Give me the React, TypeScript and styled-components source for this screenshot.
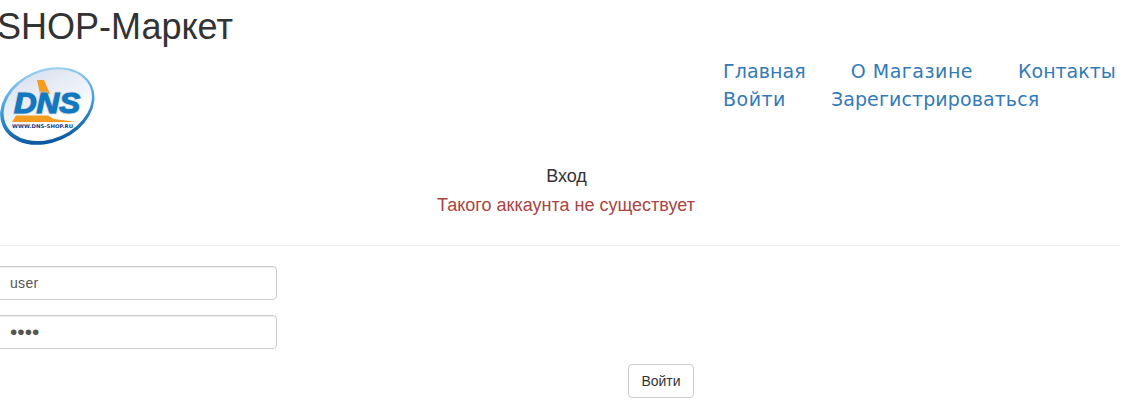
import React from "react";
import styled, { createGlobalStyle } from "styled-components";

const Global = createGlobalStyle`
  html, body { margin: 0; padding: 0; background: #fff; overflow: hidden; }
  body { font-family: "Liberation Sans", Arial, sans-serif; font-size: 14px; line-height: 20px; color: #333; }
`;

const Page = styled.div`
  width: 1120px;
  height: 403px;
`;

const Title = styled.h1`
  margin: 0;
  padding-top: 7px;
  height: 37px;
  font-size: 36px;
  font-weight: 400;
  line-height: 40px;
  color: #333;
  text-indent: -3px;
`;

const Header = styled.header`
  display: flex;
  justify-content: space-between;
  margin-top: 23px;
  height: 98px;
`;

const Logo = styled.svg`
  display: block;
  width: 96px;
  height: 80px;
`;

const Nav = styled.nav`
  width: 397px;
  margin-top: -10px;
  display: flex;
  flex-wrap: wrap;
  column-gap: 45px;
  align-content: flex-start;
`;

const NavLink = styled.a<{ $ls: number }>`
  font-family: "DejaVu Sans", sans-serif;
  font-size: 19px;
  line-height: 28px;
  height: 28px;
  color: #337ab7;
  text-decoration: none;
  white-space: nowrap;
  letter-spacing: ${(p) => p.$ls}px;
`;

const Heading = styled.div`
  text-align: center;
  font-size: 18px;
  line-height: 23px;
  color: #333;
  padding-left: 13px;
`;

const ErrorText = styled.div`
  margin-top: 6px;
  text-align: center;
  font-size: 18px;
  line-height: 23px;
  color: #a94442;
  padding-left: 12px;
`;

const Rule = styled.hr`
  margin: 28px 0 20px;
  border: 0;
  border-top: 1px solid #eee;
`;

const Field = styled.input`
  display: block;
  box-sizing: border-box;
  width: 283px;
  height: 34px;
  margin: 0 0 15px -6px;
  padding: 6px 12px 6px 15px;
  border: 1px solid #ccc;
  border-radius: 4px;
  background: #fff;
  color: #555;
  font-family: "Liberation Sans", Arial, sans-serif;
  font-size: 14px;
  letter-spacing: 0.3px;
  box-shadow: inset 0 1px 1px rgba(0, 0, 0, 0.075);
  outline: none;
`;

const PasswordField = styled(Field)`
  font-size: 21px;
  letter-spacing: 0;
`;

const Actions = styled.div`
  display: flex;
  padding-left: 628px;
`;

const Submit = styled.button`
  box-sizing: border-box;
  width: 66px;
  height: 34px;
  border: 1px solid #ccc;
  border-radius: 4px;
  background: #fff;
  color: #333;
  font-family: "Liberation Sans", Arial, sans-serif;
  font-size: 14px;
  padding: 0;
`;

const DnsLogo = () => (
  <Logo viewBox="0 0 96 80">
    <defs>
      <linearGradient id="rim" x1="0.75" y1="0" x2="0.35" y2="1">
        <stop offset="0" stopColor="#a8d8f3" />
        <stop offset="0.5" stopColor="#3f9fdc" />
        <stop offset="1" stopColor="#07529c" />
      </linearGradient>
      <linearGradient id="fill" x1="0.5" y1="0" x2="0.5" y2="1">
        <stop offset="0" stopColor="#dfe3f1" />
        <stop offset="0.5" stopColor="#eef4f9" />
        <stop offset="0.75" stopColor="#ffffff" />
      </linearGradient>
    </defs>
    <ellipse cx="47.3" cy="39" rx="49" ry="36.5" transform="rotate(-24 47.3 39)" fill="url(#rim)" />
    <ellipse cx="47.8" cy="38.2" rx="46" ry="33.5" transform="rotate(-24 47.8 38.2)" fill="url(#fill)" />
    <polygon points="37,13 44,13 50,27 40,27" fill="#f39c1f" />
    <polygon points="16,48.5 48,48.5 54,52 77,55 12,55" fill="#f39c1f" />
    <text x="14" y="46" fontFamily="Liberation Sans, sans-serif" fontWeight="700" fontStyle="italic" fontSize="29" fill="#1278bf" stroke="#c7d0d8" strokeWidth="2.4" paintOrder="stroke" textLength="66" lengthAdjust="spacingAndGlyphs">DNS</text>
    <text x="14" y="46" fontFamily="Liberation Sans, sans-serif" fontWeight="700" fontStyle="italic" fontSize="29" fill="#1278bf" stroke="#1278bf" strokeWidth="1" textLength="66" lengthAdjust="spacingAndGlyphs" aria-hidden="true">DNS</text>
    <text x="12" y="60.5" fontFamily="DejaVu Sans, sans-serif" fontWeight="700" fontSize="5" fill="#123e80" textLength="61" lengthAdjust="spacingAndGlyphs">WWW.DNS-SHOP.RU</text>
  </Logo>
);

export default function App() {
  return (
    <Page>
      <Global />
      <Title>SHOP-Маркет</Title>
      <Header>
        <DnsLogo />
        <Nav>
          <NavLink $ls={0.1} href="#">Главная</NavLink>
          <NavLink $ls={0.5} href="#">О Магазине</NavLink>
          <NavLink $ls={0} href="#">Контакты</NavLink>
          <NavLink $ls={0.5} href="#">Войти</NavLink>
          <NavLink $ls={0.1} href="#">Зарегистрироваться</NavLink>
        </Nav>
      </Header>
      <Heading>Вход</Heading>
      <ErrorText>Такого аккаунта не существует</ErrorText>
      <Rule />
      <Field type="text" defaultValue="user" />
      <PasswordField type="password" defaultValue="1234" />
      <Actions>
        <Submit>Войти</Submit>
      </Actions>
    </Page>
  );
}
